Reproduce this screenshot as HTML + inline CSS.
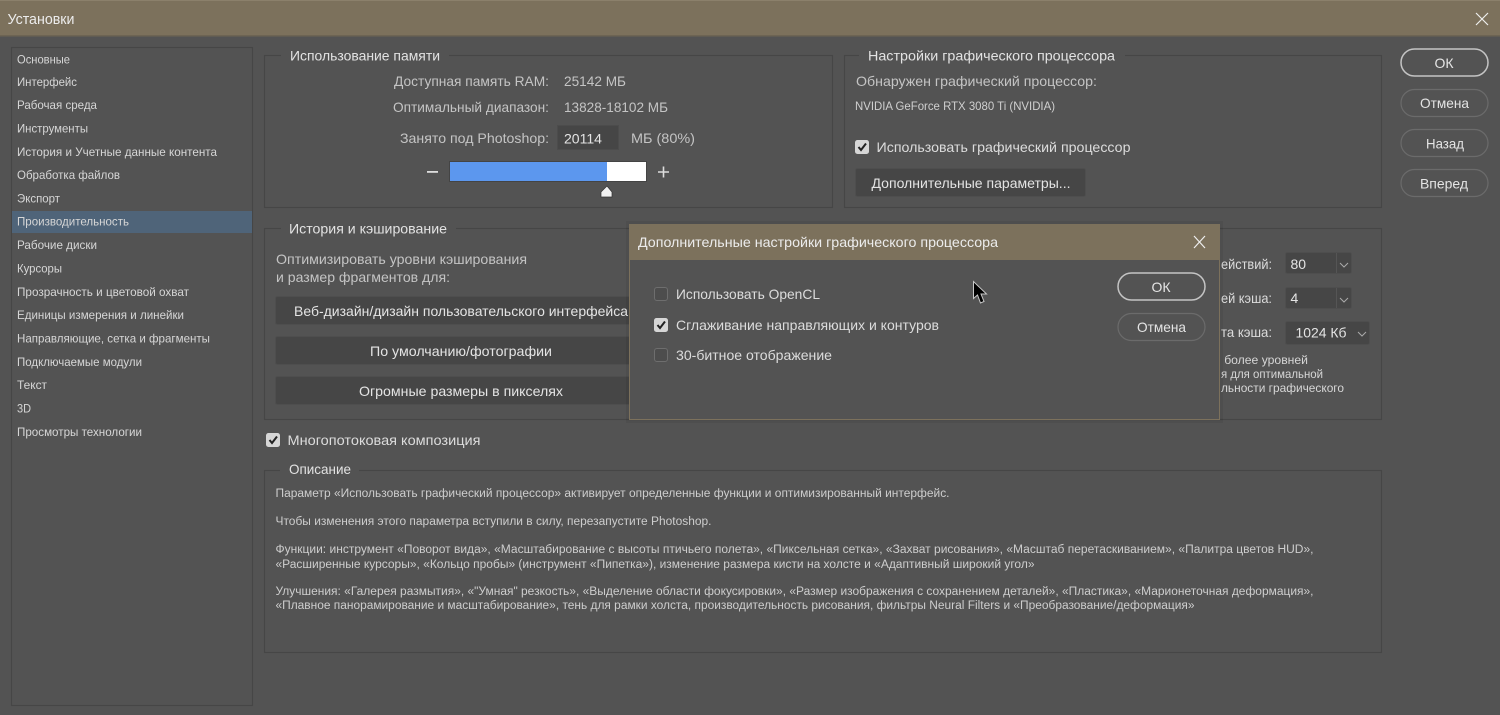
<!DOCTYPE html>
<html lang="ru"><head><meta charset="utf-8"><title>Установки</title>
<style>
html,body{margin:0;padding:0;width:1500px;height:715px;overflow:hidden;background:#535353}
svg{display:block}
text{font-family:"Liberation Sans",sans-serif;fill:#d8d8d8;white-space:pre}
.s{font-size:12px;fill:#d6d6d6}
.m{font-size:14px;fill:#dcdcdc}
.g{font-size:14px;fill:#c4c4c4}
.h{font-size:14px;fill:#e2e2e2}
.d{font-size:11.5px;fill:#cdcdcd}
.b{font-size:14px;fill:#e4e4e4}
.f{fill:none;stroke:#464646;stroke-width:1.2}
.btn{fill:#464646;stroke:#4e4e4e;stroke-width:1}
.pill{fill:none;stroke:#6b6b6b;stroke-width:1.2}
.def{fill:none;stroke:#c4c4c4;stroke-width:1.5}
.lab{fill:#535353;stroke:none}
</style></head><body>
<svg width="1500" height="715" viewBox="0 0 1500 715" xmlns="http://www.w3.org/2000/svg">
<rect width="1500" height="715" fill="#535353"/>
<rect width="1500" height="36" fill="#7c715c"/>
<rect y="0" width="1500" height="1" fill="#8b806b"/>
<rect y="35" width="1500" height="1.5" fill="#6d6453"/>
<text x="7.500" y="24" font-size="14.5" style="fill:#ececec" textLength="67" lengthAdjust="spacingAndGlyphs">Установки</text>
<path d="M1476 13L1488 25M1488 13L1476 25" stroke="#eee" stroke-width="1.2" fill="none"/>

<!-- sidebar -->
<rect x="11.5" y="47.5" width="241" height="658" fill="#535353" stroke="#464646" stroke-width="1.2"/>
<rect x="12" y="211" width="240" height="22" fill="#4f6479"/>
<text class="s" x="17" y="63.500" textLength="53" lengthAdjust="spacingAndGlyphs">Основные</text>
<text class="s" x="17" y="86" textLength="60" lengthAdjust="spacingAndGlyphs">Интерфейс</text>
<text class="s" x="17" y="109" textLength="80" lengthAdjust="spacingAndGlyphs">Рабочая среда</text>
<text class="s" x="17" y="132.500" textLength="71" lengthAdjust="spacingAndGlyphs">Инструменты</text>
<text class="s" x="17" y="156" textLength="200" lengthAdjust="spacingAndGlyphs">История и Учетные данные контента</text>
<text class="s" x="17" y="179" textLength="103" lengthAdjust="spacingAndGlyphs">Обработка файлов</text>
<text class="s" x="17" y="202.500" textLength="43" lengthAdjust="spacingAndGlyphs">Экспорт</text>
<text class="s" x="17" y="225.500" textLength="112" lengthAdjust="spacingAndGlyphs">Производительность</text>
<text class="s" x="17" y="249" textLength="80" lengthAdjust="spacingAndGlyphs">Рабочие диски</text>
<text class="s" x="17" y="272.500" textLength="45" lengthAdjust="spacingAndGlyphs">Курсоры</text>
<text class="s" x="17" y="296" textLength="172" lengthAdjust="spacingAndGlyphs">Прозрачность и цветовой охват</text>
<text class="s" x="17" y="319" textLength="167" lengthAdjust="spacingAndGlyphs">Единицы измерения и линейки</text>
<text class="s" x="17" y="342.500" textLength="193" lengthAdjust="spacingAndGlyphs">Направляющие, сетка и фрагменты</text>
<text class="s" x="17" y="366" textLength="125" lengthAdjust="spacingAndGlyphs">Подключаемые модули</text>
<text class="s" x="17" y="389" textLength="30" lengthAdjust="spacingAndGlyphs">Текст</text>
<text class="s" x="17" y="412.500" textLength="14" lengthAdjust="spacingAndGlyphs">3D</text>
<text class="s" x="17" y="436" textLength="125" lengthAdjust="spacingAndGlyphs">Просмотры технологии</text>

<!-- memory group -->
<rect class="f" x="264.5" y="55.5" width="568" height="152"/>
<rect class="lab" x="281" y="48" width="168" height="14"/>
<text class="h" x="290" y="60.500" textLength="150" lengthAdjust="spacingAndGlyphs">Использование памяти</text>
<text class="g" x="394" y="86" textLength="155" lengthAdjust="spacingAndGlyphs">Доступная память RAM:</text>
<text class="g" x="564" y="86" textLength="62" lengthAdjust="spacingAndGlyphs">25142 МБ</text>
<text class="g" x="393" y="112" textLength="156" lengthAdjust="spacingAndGlyphs">Оптимальный диапазон:</text>
<text class="g" x="564" y="112" textLength="104" lengthAdjust="spacingAndGlyphs">13828-18102 МБ</text>
<text class="g" x="400" y="143" textLength="149" lengthAdjust="spacingAndGlyphs">Занято под Photoshop:</text>
<rect x="557.5" y="125.5" width="61" height="24" fill="#464646" stroke="#4c4c4c"/>
<text class="b" x="564" y="143.500" textLength="38" lengthAdjust="spacingAndGlyphs">20114</text>
<text class="g" x="631" y="143" textLength="64" lengthAdjust="spacingAndGlyphs">МБ (80%)</text>
<rect x="427" y="171" width="11" height="1.8" fill="#ddd"/>
<rect x="449.500" y="161.500" width="197" height="20" fill="none" stroke="#444"/>
<rect x="450" y="162" width="157" height="19" fill="#5c97ee"/>
<rect x="607" y="162" width="39" height="19" fill="#fff"/>
<path d="M658 172H669M663.500 166.500V177.500" stroke="#ddd" stroke-width="1.600" fill="none"/>
<path d="M607 186L612 192V197H601V192Z" fill="#f2f2f2" stroke="#333" stroke-width=".7"/>

<!-- GPU group -->
<rect class="f" x="844.500" y="55.500" width="537" height="152"/>
<rect class="lab" x="859" y="48" width="266" height="14"/>
<text class="h" x="868" y="60.500" textLength="247" lengthAdjust="spacingAndGlyphs">Настройки графического процессора</text>
<text class="g" x="856" y="86" textLength="241" lengthAdjust="spacingAndGlyphs">Обнаружен графический процессор:</text>
<text class="s" x="855" y="110" textLength="200" lengthAdjust="spacingAndGlyphs" style="fill:#cfcfcf">NVIDIA GeForce RTX 3080 Ti (NVIDIA)</text>
<rect x="855" y="140" width="14" height="14" rx="2.500" fill="#d6d6d6"/>
<path d="M858.500 147L861 150L866 143.500" stroke="#222" stroke-width="2" fill="none"/>
<text class="m" x="876.500" y="152" textLength="254" lengthAdjust="spacingAndGlyphs">Использовать графический процессор</text>
<rect class="btn" x="855.500" y="168.500" width="230" height="28" rx="2"/>
<text class="b" x="871.500" y="188" textLength="199" lengthAdjust="spacingAndGlyphs">Дополнительные параметры...</text>

<!-- Right buttons -->
<rect class="def" x="1401" y="49" width="87" height="27" rx="13.500"/>
<text class="b" x="1444" y="68" text-anchor="middle">ОК</text>
<rect class="pill" x="1401" y="89.500" width="87" height="27" rx="13.500"/>
<text class="b" x="1420" y="108" textLength="49" lengthAdjust="spacingAndGlyphs">Отмена</text>
<rect class="pill" x="1401" y="129.500" width="87" height="27" rx="13.500"/>
<text class="b" x="1426" y="148.500" textLength="38" lengthAdjust="spacingAndGlyphs">Назад</text>
<rect class="pill" x="1401" y="169.500" width="87" height="27" rx="13.500"/>
<text class="b" x="1420" y="188.500" textLength="48" lengthAdjust="spacingAndGlyphs">Вперед</text>

<!-- history group -->
<rect class="f" x="264.500" y="228.500" width="1117" height="191"/>
<rect class="lab" x="281" y="221" width="175" height="14"/>
<text class="h" x="289" y="233.500" textLength="158" lengthAdjust="spacingAndGlyphs">История и кэширование</text>
<text class="g" x="276" y="264" textLength="251" lengthAdjust="spacingAndGlyphs">Оптимизировать уровни кэширования</text>
<text class="g" x="276" y="282" textLength="174" lengthAdjust="spacingAndGlyphs">и размер фрагментов для:</text>
<rect class="btn" x="275.500" y="296.500" width="360" height="28" rx="2"/>
<text class="b" x="294" y="316" textLength="334" lengthAdjust="spacingAndGlyphs">Веб-дизайн/дизайн пользовательского интерфейса</text>
<rect class="btn" x="275.500" y="336.500" width="360" height="28" rx="2"/>
<text class="b" x="370" y="356" textLength="182" lengthAdjust="spacingAndGlyphs">По умолчанию/фотографии</text>
<rect class="btn" x="275.500" y="376.500" width="360" height="28" rx="2"/>
<text class="b" x="359" y="396" textLength="204" lengthAdjust="spacingAndGlyphs">Огромные размеры в пикселях</text>

<text class="m" x="1221" y="269" textLength="51" lengthAdjust="spacingAndGlyphs">ействий:</text>
<rect class="btn" x="1285.500" y="252.500" width="66" height="21" rx="2"/>
<path d="M1336.500 253V273" stroke="#555"/>
<text class="b" x="1290.500" y="269">80</text>
<path d="M1340 263L1344 267L1348 263" stroke="#aaa" fill="none"/>
<text class="m" x="1221" y="303" textLength="51" lengthAdjust="spacingAndGlyphs">ей кэша:</text>
<rect class="btn" x="1285.500" y="287.500" width="66" height="21" rx="2"/>
<path d="M1336.500 288V308" stroke="#555"/>
<text class="b" x="1290.500" y="303">4</text>
<path d="M1340 298L1344 302L1348 298" stroke="#aaa" fill="none"/>
<text class="m" x="1221" y="337" textLength="51" lengthAdjust="spacingAndGlyphs">та кэша:</text>
<rect class="btn" x="1285.500" y="321.500" width="84" height="23" rx="2"/>
<text class="b" x="1295.500" y="337.500" textLength="51" lengthAdjust="spacingAndGlyphs">1024 Кб</text>
<path d="M1358 332L1362 336L1366 332" stroke="#aaa" fill="none"/>
<text class="s" x="1214" y="364" textLength="94" lengthAdjust="spacingAndGlyphs">и более уровней</text>
<text class="s" x="1221" y="378" textLength="102" lengthAdjust="spacingAndGlyphs">я для оптимальной</text>
<text class="s" x="1221" y="392" textLength="123" lengthAdjust="spacingAndGlyphs">льности графического</text>

<!-- multithread -->
<rect x="266" y="433" width="14" height="14" rx="2.500" fill="#d6d6d6"/>
<path d="M269.500 440L272 443L277 436.500" stroke="#222" stroke-width="2" fill="none"/>
<text class="m" x="287.500" y="445" textLength="193" lengthAdjust="spacingAndGlyphs">Многопотоковая композиция</text>

<!-- description -->
<rect class="f" x="264.500" y="470.500" width="1117" height="182"/>
<rect class="lab" x="280" y="463" width="79" height="14"/>
<text class="h" x="289" y="474" textLength="62" lengthAdjust="spacingAndGlyphs">Описание</text>
<text class="d" x="275.500" y="497" textLength="674" lengthAdjust="spacingAndGlyphs">Параметр «Использовать графический процессор» активирует определенные функции и оптимизированный интерфейс.</text>
<text class="d" x="275.500" y="525" textLength="436" lengthAdjust="spacingAndGlyphs">Чтобы изменения этого параметра вступили в силу, перезапустите Photoshop.</text>
<text class="d" x="275.500" y="553" textLength="1038" lengthAdjust="spacingAndGlyphs">Функции: инструмент «Поворот вида», «Масштабирование с высоты птичьего полета», «Пиксельная сетка», «Захват рисования», «Масштаб перетаскиванием», «Палитра цветов HUD»,</text>
<text class="d" x="275.500" y="568" textLength="759" lengthAdjust="spacingAndGlyphs">«Расширенные курсоры», «Кольцо пробы» (инструмент «Пипетка»), изменение размера кисти на холсте и «Адаптивный широкий угол»</text>
<text class="d" x="275.500" y="595" textLength="1038" lengthAdjust="spacingAndGlyphs">Улучшения: «Галерея размытия», «"Умная" резкость», «Выделение области фокусировки», «Размер изображения с сохранением деталей», «Пластика», «Марионеточная деформация»,</text>
<text class="d" x="275.500" y="609" textLength="919" lengthAdjust="spacingAndGlyphs">«Плавное панорамирование и масштабирование», тень для рамки холста, производительность рисования, фильтры Neural Filters и «Преобразование/деформация»</text>

<!-- modal -->
<rect x="626" y="221" width="597" height="202" fill="#000" opacity=".06"/>
<rect x="629.500" y="224.500" width="590" height="195" fill="#535353" stroke="#7c715c"/>
<rect x="629" y="224" width="591" height="36" fill="#7c715c"/>
<text x="638" y="247" font-size="14" style="fill:#ececec" textLength="360" lengthAdjust="spacingAndGlyphs">Дополнительные настройки графического процессора</text>
<path d="M1194 236L1205 248M1205 236L1194 248" stroke="#eee" stroke-width="1.200" fill="none"/>
<rect x="654.500" y="287.500" width="13" height="13" rx="2.500" fill="#4d4d4d" stroke="#6e6e6e"/>
<text class="m" x="676" y="299" textLength="144" lengthAdjust="spacingAndGlyphs">Использовать OpenCL</text>
<rect x="654" y="318" width="14" height="14" rx="2.500" fill="#d6d6d6"/>
<path d="M657.500 325L660 328L665 321.500" stroke="#222" stroke-width="2" fill="none"/>
<text class="m" x="676" y="330" textLength="263" lengthAdjust="spacingAndGlyphs">Сглаживание направляющих и контуров</text>
<rect x="654.500" y="348.500" width="13" height="13" rx="2.500" fill="#4d4d4d" stroke="#6e6e6e"/>
<text class="m" x="676" y="360" textLength="156" lengthAdjust="spacingAndGlyphs">30-битное отображение</text>
<rect class="def" x="1118" y="273" width="87" height="27" rx="13.500"/>
<text class="b" x="1161" y="292" text-anchor="middle">ОК</text>
<rect class="pill" x="1118" y="313.500" width="87" height="27" rx="13.500"/>
<text class="b" x="1137" y="332" textLength="49" lengthAdjust="spacingAndGlyphs">Отмена</text>

<!-- cursor -->
<path d="M973.500 281.500V298.500L977.500 295L980.500 303L984 301.500L981 294H986.500Z" fill="#000" stroke="#c8c8c8" stroke-width="1"/>
</svg>
</body></html>
